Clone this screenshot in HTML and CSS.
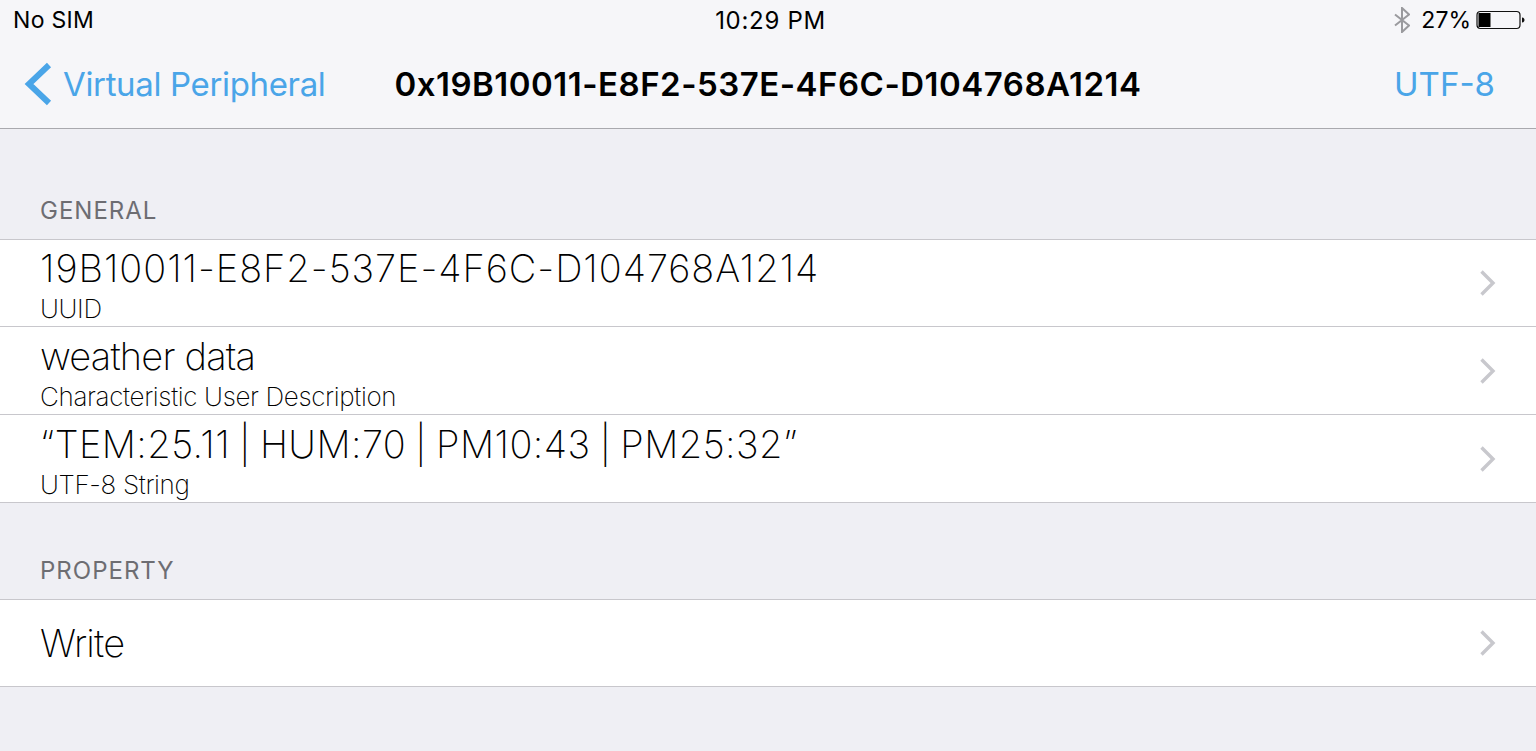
FILE: index.html
```html
<!DOCTYPE html>
<html lang="en">
<head>
    <meta charset="UTF-8">
    <title>Characteristic</title>
    <link rel="stylesheet" href="styles.css">
</head>
<body>
    <header class="topbar">
        <div class="status">
            <span class="carrier">No SIM</span>
            <span class="clock">10:29 PM</span>
            <div class="status-right">
                <svg class="bt" width="16" height="26" viewBox="0 0 16 26"><path d="M1 7.5 L15 18.5 L8 25 V1 L15 7.5 L1 18.5" fill="none" stroke="#9a9a9e" stroke-width="2"/></svg>
                <span class="pct">27%</span>
                <svg class="battery" width="50" height="20" viewBox="0 0 50 20"><rect x="1" y="1.5" width="43" height="17" rx="3.5" fill="none" stroke="#111" stroke-width="1.2"/><rect x="2.5" y="3" width="12" height="14" fill="#000"/><path d="M46 7.5 C48 7.8 48.5 8.8 48.5 10 C48.5 11.2 48 12.2 46 12.5 Z" fill="#111"/></svg>
            </div>
        </div>
        <nav class="navbar">
            <a class="back">
                <svg width="28" height="44" viewBox="0 0 28 44"><path d="M25 3 L5 22 L25 41" fill="none" stroke="#4aa5e8" stroke-width="6"/></svg>
                <span>Virtual Peripheral</span>
            </a>
            <div class="nav-title">0x19B10011-E8F2-537E-4F6C-D104768A1214</div>
            <a class="nav-action">UTF-8</a>
        </nav>
    </header>

    <main>
        <h2 class="section-label first">GENERAL</h2>
        <ul class="group">
            <li class="row">
                <div class="row-text">
                    <div class="row-title uuid">19B10011-E8F2-537E-4F6C-D104768A1214</div>
                    <div class="row-sub">UUID</div>
                </div>
                <svg class="chevron" width="18" height="28" viewBox="0 0 18 28"><path d="M2.5 2.5 L14 14 L2.5 25.5" fill="none" stroke="#c8c8cd" stroke-width="3.4"/></svg>
            </li>
            <li class="row">
                <div class="row-text">
                    <div class="row-title words">weather data</div>
                    <div class="row-sub">Characteristic User Description</div>
                </div>
                <svg class="chevron" width="18" height="28" viewBox="0 0 18 28"><path d="M2.5 2.5 L14 14 L2.5 25.5" fill="none" stroke="#c8c8cd" stroke-width="3.4"/></svg>
            </li>
            <li class="row">
                <div class="row-text">
                    <div class="row-title value">“TEM:25.11 | HUM:70 | PM10:43 | PM25:32”</div>
                    <div class="row-sub">UTF-8 String</div>
                </div>
                <svg class="chevron" width="18" height="28" viewBox="0 0 18 28"><path d="M2.5 2.5 L14 14 L2.5 25.5" fill="none" stroke="#c8c8cd" stroke-width="3.4"/></svg>
            </li>
        </ul>

        <h2 class="section-label">PROPERTY</h2>
        <ul class="group">
            <li class="row single">
                <div class="row-text">
                    <div class="row-title words">Write</div>
                </div>
                <svg class="chevron" width="18" height="28" viewBox="0 0 18 28"><path d="M2.5 2.5 L14 14 L2.5 25.5" fill="none" stroke="#c8c8cd" stroke-width="3.4"/></svg>
            </li>
        </ul>
    </main>
</body>
</html>
```

FILE: styles.css
```css
html, body {
    margin: 0;
    padding: 0;
}
body {
    background: #efeff4;
    font-family: 'Inter', 'Liberation Sans', sans-serif;
    color: #000;
    height: 751px;
    overflow: hidden;
}
.topbar {
    height: 128px;
    background: #f6f6f9;
    border-bottom: 1px solid #a9a9ae;
}
.status {
    height: 40px;
    padding: 0 10px 0 13px;
    display: grid;
    grid-template-columns: 1fr auto 1fr;
    align-items: center;
    font-size: 23px;
}
.carrier {
    letter-spacing: 0.3px;
}
.clock {
    font-size: 24px;
    letter-spacing: 0.7px;
    margin-left: 2px;
}
.status-right {
    display: flex;
    align-items: center;
    justify-content: flex-end;
    gap: 10px;
}
.bt {
    margin-right: 1px;
}
.battery {
    margin-left: -5px;
}
.navbar {
    height: 88px;
    padding: 0 41px;
    display: grid;
    grid-template-columns: 1fr auto 1fr;
    align-items: center;
    font-size: 33px;
}
.back {
    display: flex;
    align-items: center;
    gap: 11px;
    margin-left: -17px;
    color: #4aa5e8;
    letter-spacing: -0.35px;
}
.nav-title {
    font-weight: 600;
    font-size: 33px;
    letter-spacing: 0.5px;
}
.nav-action {
    color: #4aa5e8;
    justify-self: end;
}
.section-label {
    margin: 0;
    height: 57px;
    padding: 2px 40px 0;
    display: flex;
    align-items: center;
    font-size: 24px;
    font-weight: 400;
    color: #6d6d72;
    letter-spacing: 1px;
}
.section-label.first {
    margin-top: 51px;
}
.section-label:not(.first) {
    margin-top: 37px;
}
.group {
    list-style: none;
    margin: 0;
    padding: 0;
    background: #fff;
    border-top: 1px solid #c8c7cc;
    border-bottom: 1px solid #c8c7cc;
}
.row {
    height: 86.4px;
    padding: 0 40px;
    display: flex;
    align-items: center;
    justify-content: space-between;
    border-bottom: 1px solid #c8c7cc;
}
.row:last-child {
    height: 86px;
    padding-top: 1px;
    border-bottom: 0;
}
.row.single {
    height: 86.5px;
    padding-top: 0;
}
.row-text {
    display: flex;
    flex-direction: column;
    padding-top: 4px;
}
.single .row-text {
    padding-top: 0;
}
.row-title {
    font-size: 38px;
    font-weight: 200;
    line-height: 46px;
}
.row-title.uuid {
    letter-spacing: 0.95px;
}
.row-title.words {
    letter-spacing: -0.8px;
}
.row-title.value {
    letter-spacing: 0.45px;
    word-spacing: -2px;
}
.row-sub {
    font-size: 26px;
    font-weight: 200;
    line-height: 32px;
    letter-spacing: -0.35px;
    margin-top: 2px;
}
.chevron {
    margin-right: -1px;
}
```
